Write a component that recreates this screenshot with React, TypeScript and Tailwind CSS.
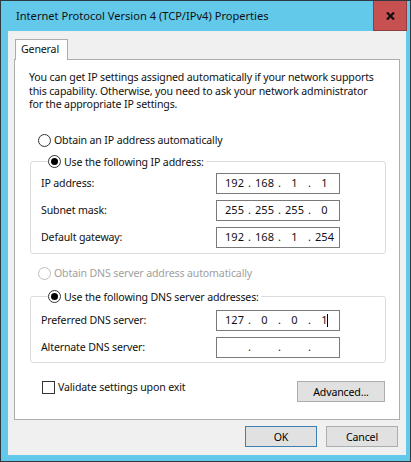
import React from "react";

const font = { fontFamily: '"Noto Sans", "Segoe UI", sans-serif' };

function Radio({ checked, disabled }: { checked?: boolean; disabled?: boolean }) {
  return (
    <span
      className={`w-[13px] h-[13px] rounded-full border bg-white flex items-center justify-center shrink-0 ${
        disabled ? "border-[#bcbcbc]" : "border-[#333333]"
      }`}
    >
      {checked && <span className="w-[7px] h-[7px] rounded-full bg-black" />}
    </span>
  );
}

function IpBox({ octets, caret }: { octets: string[]; caret?: boolean }) {
  return (
    <div className="w-[124px] h-[21px] border border-[#7a7a7a] bg-white flex items-center pl-[6px] tracking-normal text-[11px]">
      {octets.map((o, i) => (
        <React.Fragment key={i}>
          <span className="w-[23px] text-center relative">
            {o}
            {caret && i === 3 && (
              <span className="absolute left-[14px] top-[1px] w-px h-[13px] bg-black" />
            )}
          </span>
          {i < 3 && <span className="w-[7px] text-center">.</span>}
        </React.Fragment>
      ))}
    </div>
  );
}

function Row({ label, octets, caret }: { label: string; octets: string[]; caret?: boolean }) {
  return (
    <div className="flex items-center h-[21px]">
      <span className="w-[175px]">{label}</span>
      <IpBox octets={octets} caret={caret} />
    </div>
  );
}

function Button({ children, primary, className = "" }: { children: React.ReactNode; primary?: boolean; className?: string }) {
  return (
    <button
      className={`h-[21px] bg-[#e1e1e1] border flex items-center justify-center text-black ${
        primary ? "border-[#3c7fb1]" : "border-[#adadad]"
      } ${className}`}
    >
      {children}
    </button>
  );
}

export default function App() {
  return (
    <div
      className="w-[411px] h-[462px] bg-[#62c9ea] border border-[#2e3a40] flex flex-col text-[10.6px] tracking-[-0.15px] leading-[14px] text-[#111111] whitespace-nowrap"
      style={font}
    >
      {/* Title bar */}
      <div className="h-[30px] flex items-start shrink-0">
        <div className="flex-1 pl-[15px] pt-[7px] leading-[16px] text-[11.1px] tracking-normal">
          Internet Protocol Version 4 (TCP/IPv4) Properties
        </div>
        <div className="w-[34px] h-[30px] mr-[3px] bg-[#c75050] border border-t-0 border-[#8e3e3e] flex items-center justify-center">
          <svg width="9" height="8" viewBox="0 0 9 8">
            <path d="M1 0.5 L8 7.5 M8 0.5 L1 7.5" stroke="#111" strokeWidth="2.2" />
          </svg>
        </div>
      </div>

      {/* Client area */}
      <div className="ml-[7px] mr-[4px] h-[424px] bg-[#f0f0f0] flex flex-col px-[6px] pt-[8px]">
        <div className="ml-[1px] w-[53px] h-[21px] bg-white border border-b-0 border-[#adadad] pl-[5px] leading-[19px] relative z-10 -mb-[1px]">
          General
        </div>
        <div className="h-[361px] bg-white border border-[#adadad] flex flex-col">
          <p className="mt-[11px] pl-[14px] leading-[13.5px]">
            You can get IP settings assigned automatically if your network supports
            <br />
            this capability. Otherwise, you need to ask your network administrator
            <br />
            for the appropriate IP settings.
          </p>

          <label className="mt-[22px] ml-[23px] flex items-center gap-[3px] h-[13px]">
            <Radio />
            <span>Obtain an IP address automatically</span>
          </label>

          <fieldset className="mt-[7px] ml-[15px] w-[356px] border border-[#dcdcdc] rounded-[3px] px-[10px] pt-[3px] pb-[5px] flex flex-col gap-[6px]">
            <legend className="ml-[7px] h-[16px] flex items-center gap-[3px] pr-[2px]">
              <Radio checked />
              <span>Use the following IP address:</span>
            </legend>
            <Row label="IP address:" octets={["192", "168", "1", "1"]} />
            <Row label="Subnet mask:" octets={["255", "255", "255", "0"]} />
            <Row label="Default gateway:" octets={["192", "168", "1", "254"]} />
          </fieldset>

          <label className="mt-[13px] ml-[23px] flex items-center gap-[3px] h-[13px] text-[#a0a0a0]">
            <Radio disabled />
            <span>Obtain DNS server address automatically</span>
          </label>

          <fieldset className="mt-[9px] ml-[15px] w-[356px] border border-[#dcdcdc] rounded-[3px] px-[10px] pt-[5px] pb-[4px] flex flex-col gap-[6px]">
            <legend className="ml-[7px] h-[16px] flex items-center gap-[3px] pr-[2px]">
              <Radio checked />
              <span>Use the following DNS server addresses:</span>
            </legend>
            <Row label="Preferred DNS server:" octets={["127", "0", "0", "1"]} caret />
            <Row label="Alternate DNS server:" octets={["", "", "", ""]} />
          </fieldset>

          <div className="mt-[18px] ml-[27px] mr-[14px] flex items-start justify-between">
            <label className="flex items-center gap-[3px] h-[13px]">
              <span className="w-[13px] h-[13px] border border-[#333333] bg-white" />
              <span>Validate settings upon exit</span>
            </label>
            <Button className="w-[88px] pt-[2px]">Advanced...</Button>
          </div>
        </div>

        <div className="mt-[6px] mr-[2px] flex justify-end gap-[9px]">
          <Button primary className="w-[72px]">OK</Button>
          <Button className="w-[72px]">Cancel</Button>
        </div>
      </div>
    </div>
  );
}
